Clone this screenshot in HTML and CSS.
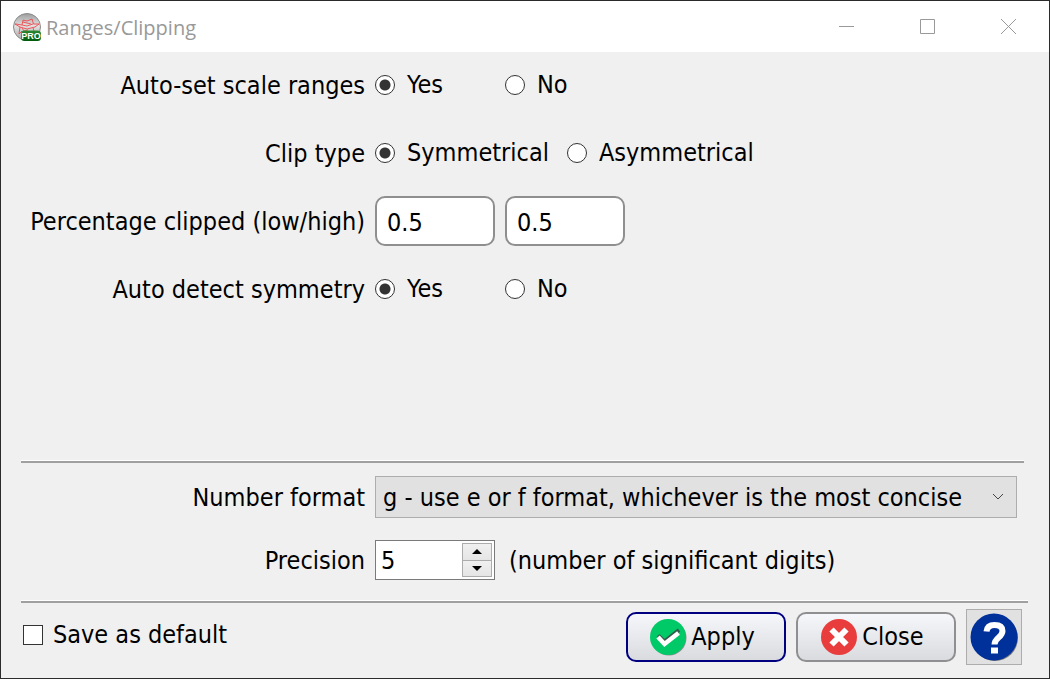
FILE: index.html
```html
<!DOCTYPE html>
<html lang="en">
<head>
<meta charset="utf-8">
<title>Ranges/Clipping</title>
<link rel="stylesheet" href="styles.css">
</head>
<body>
<div class="window">
  <header class="titlebar">
    <svg class="app-icon" viewBox="0 0 28 28" aria-hidden="true">
      <defs>
        <linearGradient id="ball" x1="0" y1="0" x2="0" y2="1"><stop offset="0" stop-color="#9c9c9c"/><stop offset=".45" stop-color="#e2e2e2"/><stop offset="1" stop-color="#a8a8a8"/></linearGradient>
        <linearGradient id="badge" x1="0" y1="0" x2="0" y2="1"><stop offset="0" stop-color="#2c8a35"/><stop offset="1" stop-color="#005a0c"/></linearGradient>
      </defs>
      <circle cx="14" cy="14" r="13.500" fill="url(#ball)" stroke="#8a8a8a"/>
      <path d="M3 11l6 1 1-5 4 1 5-2 1.500 5 5.500 0-4 3-8 2-7-2-5-3zM9 12l5 1 6-2M10 9l8 2M7 14l-1 7 3-3M9 15l2 3 4-1M20 15l1 3" fill="none" stroke="#ee4a4f" stroke-width=".9"/>
      <rect x="8" y="17.500" width="20" height="10.500" rx="3.500" fill="url(#badge)"/>
      <text class="badge-text" x="18" y="25.800" text-anchor="middle">PRO</text>
    </svg>
    <h1 class="title">Ranges/Clipping</h1>
    <button class="caption-button" type="button" aria-label="Minimize"><svg class="caption-icon" viewBox="0 0 16 16"><path d="M0 7.500h15"/></svg></button>
    <button class="caption-button" type="button" aria-label="Maximize"><svg class="caption-icon" viewBox="0 0 16 16"><path d="M.5.500h14v14H.5z"/></svg></button>
    <button class="caption-button" type="button" aria-label="Close window"><svg class="caption-icon" viewBox="0 0 16 16"><path d="M0 0l15 15M15 0L0 15"/></svg></button>
  </header>
  <form class="content">
    <div class="fields">
      <div class="row" role="radiogroup" aria-labelledby="ranges-label">
        <span class="label" id="ranges-label">Auto-set scale ranges</span>
        <div class="options">
          <label class="option"><input class="radio" type="radio" name="ranges" checked>Yes</label>
          <label class="option"><input class="radio" type="radio" name="ranges">No</label>
        </div>
      </div>
      <div class="row" role="radiogroup" aria-labelledby="clip-label">
        <span class="label" id="clip-label">Clip type</span>
        <div class="options">
          <label class="option"><input class="radio" type="radio" name="clip" checked>Symmetrical</label>
          <label class="option"><input class="radio" type="radio" name="clip">Asymmetrical</label>
        </div>
      </div>
      <div class="row">
        <label class="label" for="low">Percentage clipped (low/high)</label>
        <div class="pair">
          <input class="text-box" id="low" type="text" value="0.5">
          <input class="text-box" type="text" value="0.5" aria-label="Percentage clipped, high">
        </div>
      </div>
      <div class="row" role="radiogroup" aria-labelledby="symmetry-label">
        <span class="label" id="symmetry-label">Auto detect symmetry</span>
        <div class="options">
          <label class="option"><input class="radio" type="radio" name="symmetry" checked>Yes</label>
          <label class="option"><input class="radio" type="radio" name="symmetry">No</label>
        </div>
      </div>
    </div>
    <hr class="rule rule-short">
    <div class="formats">
      <div class="row">
        <label class="label" for="format">Number format</label>
        <div class="select-wrap">
          <select class="select" id="format"><option>g - use e or f format, whichever is the most concise</option></select>
          <svg class="chevron" viewBox="0 0 12 8" aria-hidden="true"><path d="M1 1l5 5 5-5"/></svg>
        </div>
      </div>
      <div class="row">
        <label class="label" for="precision">Precision</label>
        <div class="precision">
          <div class="spin">
            <input class="spin-input" id="precision" type="text" inputmode="numeric" value="5">
            <div class="spin-buttons">
              <button class="spin-button" type="button" aria-label="Increase"><svg class="arrow" viewBox="0 0 10 5"><path d="M0 5 5 0l5 5z"/></svg></button>
              <button class="spin-button" type="button" aria-label="Decrease"><svg class="arrow" viewBox="0 0 10 5"><path d="M0 0l5 5 5-5z"/></svg></button>
            </div>
          </div>
          <span class="hint">(number of significant digits)</span>
        </div>
      </div>
    </div>
    <hr class="rule">
    <footer class="footer">
      <label class="save"><input class="checkbox" type="checkbox">Save as default</label>
      <button class="button button-default" type="button">
        <svg class="button-icon" viewBox="0 0 38 38" aria-hidden="true"><circle cx="20" cy="20" r="17.500" fill="#8b8f8d"/><circle cx="19" cy="19" r="18" fill="#00c968"/><path d="M9 17.500l6.500 6L30 12" fill="none" stroke="#35594a" stroke-width="4"/><path d="M9 19l6.500 7L29.500 15" fill="none" stroke="#fff" stroke-width="4.500"/></svg>Apply
      </button>
      <button class="button" type="button">
        <svg class="button-icon" viewBox="0 0 38 38" aria-hidden="true"><circle cx="19" cy="19" r="18" fill="#e93d3d"/><path d="M11.500 11.500l15 15M26.500 11.500l-15 15" fill="none" stroke="#fff" stroke-width="6"/></svg>Close
      </button>
      <button class="help" type="button" aria-label="Help">
        <svg class="help-icon" viewBox="0 0 48 48" aria-hidden="true"><circle cx="25" cy="25" r="23" fill="#77797f"/><circle cx="24" cy="24" r="23.500" fill="#00309a"/><path d="M16.500 18.500c.5-5 4-6.500 8-6.500 5 0 8 2 8 6 0 6.500-8 6.500-8 13.500" fill="none" stroke="#fff" stroke-width="6"/><path d="M21 34.500h7v6h-7z" fill="#fff"/></svg>
      </button>
    </footer>
  </form>
</div>
</body>
</html>
```
FILE: styles.css
```css
* { box-sizing: border-box; }
body {
  margin: 0;
  font: 25px/30px "DejaVu Sans Condensed", "DejaVu Sans", sans-serif;
  color: #000;
}
button, input, select { font: inherit; color: inherit; margin: 0; }
.window {
  display: flex;
  flex-direction: column;
  min-height: 100vh;
  border: 1px solid #2b2b2b;
  background: #f0f0f0;
}
.titlebar {
  display: flex;
  align-items: center;
  height: 51px;
  padding-left: 12px;
  background: #fff;
}
.app-icon { width: 28px; height: 28px; margin-right: 5px; }
.badge-text { font: bold 9px "Liberation Sans", sans-serif; fill: #fff; }
.title {
  flex: 1;
  margin: 0;
  padding-top: 2px;
  font: 20px/28px "Open Sans", sans-serif;
  color: #999;
}
.caption-button {
  display: grid;
  place-items: center;
  width: 81px;
  height: 51px;
  padding: 0;
  border: 0;
  background: none;
}
.caption-icon { width: 16px; height: 16px; fill: none; stroke: #999; }
.content {
  display: flex;
  flex: 1;
  flex-direction: column;
  padding: 0 21px 13px 20px;
}
.fields {
  display: grid;
  flex: 1;
  align-content: start;
  gap: 18px;
  padding-top: 8px;
}
.row {
  display: grid;
  grid-template-columns: 344px 1fr;
  align-items: center;
  gap: 10px;
}
.fields .row { min-height: 50px; }
.label { padding-top: 2px; text-align: right; white-space: nowrap; }
.options { display: flex; gap: 18px; }
.option { display: flex; align-items: center; gap: 12px; min-width: 112px; }
.radio {
  appearance: none;
  flex: none;
  width: 20px;
  height: 20px;
  border: 1px solid #333;
  border-radius: 50%;
  background: #fff;
}
.radio:checked { background: radial-gradient(circle, #333 5px, #fff 6px); }
.pair { display: flex; gap: 10px; }
.text-box {
  width: 120px;
  height: 50px;
  padding: 2px 10px 0;
  border: 2px solid #8f8f8f;
  border-radius: 10px;
  background: #fff;
}
.rule {
  width: 100%;
  height: 3px;
  margin: 0;
  border: 0;
  border-top: 1px solid #fff;
  background: #a0a0a0;
}
.rule-short { width: calc(100% - 4px); }
.formats { display: grid; gap: 22px; padding: 13px 11px 20px 0; }
.select-wrap { display: grid; align-items: center; }
.select {
  grid-area: 1 / 1;
  appearance: none;
  width: 100%;
  height: 42px;
  padding: 2px 30px 0 7px;
  border: 1px solid #adadad;
  border-radius: 0;
  background: #e1e1e1;
}
.chevron {
  grid-area: 1 / 1;
  justify-self: end;
  width: 12px;
  height: 8px;
  margin-right: 13px;
  fill: none;
  stroke: #444;
  pointer-events: none;
}
.precision { display: flex; align-items: center; gap: 14px; }
.hint { padding-top: 2px; }
.spin {
  display: flex;
  width: 120px;
  height: 40px;
  padding: 2px;
  border: 1px solid #7a7a7a;
  background: #fff;
}
.spin-input { flex: 1; min-width: 0; padding: 2px 3px 0; border: 0; background: none; }
.spin-buttons { display: grid; width: 30px; border: 1px solid #acacac; }
.spin-button {
  display: grid;
  place-items: center;
  padding: 0;
  border: 0;
  background: linear-gradient(#f0f0f0, #e5e5e5);
}
.spin-button + .spin-button { border-top: 1px solid #acacac; }
.arrow { width: 10px; height: 5px; }
.footer { display: flex; align-items: center; gap: 10px; padding: 6px 6px 0 0; }
.save {
  display: flex;
  align-items: center;
  gap: 10px;
  margin-right: auto;
  padding: 0 0 4px 2px;
}
.checkbox {
  appearance: none;
  width: 20px;
  height: 20px;
  border: 1px solid #333;
  background: #fff;
}
.button {
  display: flex;
  align-items: center;
  justify-content: center;
  gap: 4px;
  width: 160px;
  height: 50px;
  padding: 0 8px 0 0;
  border: 2px solid #8f8f91;
  border-radius: 10px;
  background: linear-gradient(#f6f7fa, #dadbde);
}
.button-default { border-color: #000080; }
.button-icon { width: 38px; height: 38px; }
.help {
  display: grid;
  place-items: center;
  width: 56px;
  height: 56px;
  padding: 0;
  border: 1px solid #adadad;
  background: #e1e1e1;
}
.help-icon { width: 48px; height: 48px; }
```
